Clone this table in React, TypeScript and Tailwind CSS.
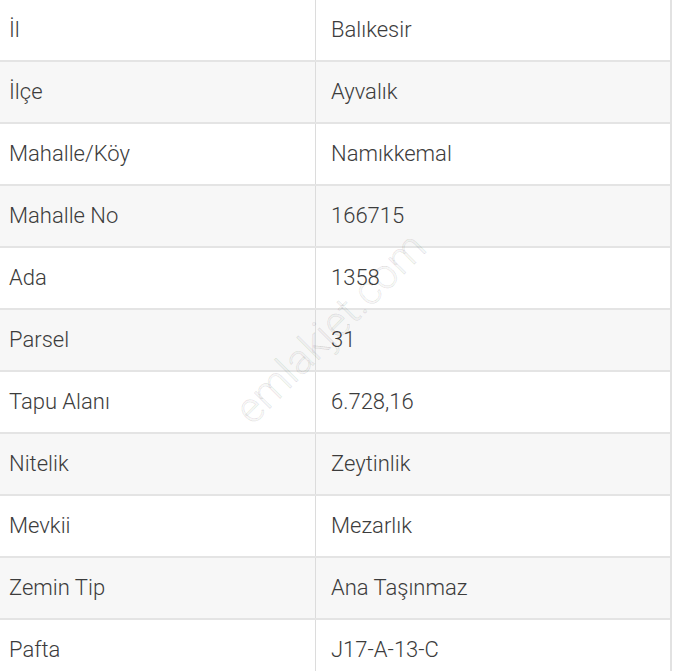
const rows: [string, string][] = [
  ["İl", "Balıkesir"],
  ["İlçe", "Ayvalık"],
  ["Mahalle/Köy", "Namıkkemal"],
  ["Mahalle No", "166715"],
  ["Ada", "1358"],
  ["Parsel", "31"],
  ["Tapu Alanı", "6.728,16"],
  ["Nitelik", "Zeytinlik"],
  ["Mevkii", "Mezarlık"],
  ["Zemin Tip", "Ana Taşınmaz"],
  ["Pafta", "J17-A-13-C"],
];

export default function App() {
  return (
    <div className="relative w-[673px] h-[671px] overflow-hidden bg-white font-['Roboto',sans-serif] font-light text-[22px] text-[#3c3c3c]">
      <div className="w-[672px] border-r-2 border-[#e2e2e2]">
        {rows.map(([label, value], i) => (
          <div
            key={label}
            className={`flex h-[62px] border-b-2 border-[#e4e4e4] ${i % 2 === 1 ? "bg-[#f7f7f7]" : "bg-white"}`}
          >
            <div className="w-[316px] shrink-0 flex items-center pl-[9px] pb-[2px] border-r border-[#dcdcdc]">
              {label}
            </div>
            <div className="flex-1 flex items-center pl-[15px] pb-[2px]">{value}</div>
          </div>
        ))}
      </div>

      {/* watermark */}
      <div className="absolute left-[330px] top-[328px] -translate-x-1/2 -translate-y-1/2 -rotate-45 pointer-events-none select-none text-[42px] font-light text-[rgba(0,0,0,0.045)] whitespace-nowrap [-webkit-text-stroke:0.6px_rgba(0,0,0,0.12)]">
        emlakjet.com
      </div>
    </div>
  );
}
